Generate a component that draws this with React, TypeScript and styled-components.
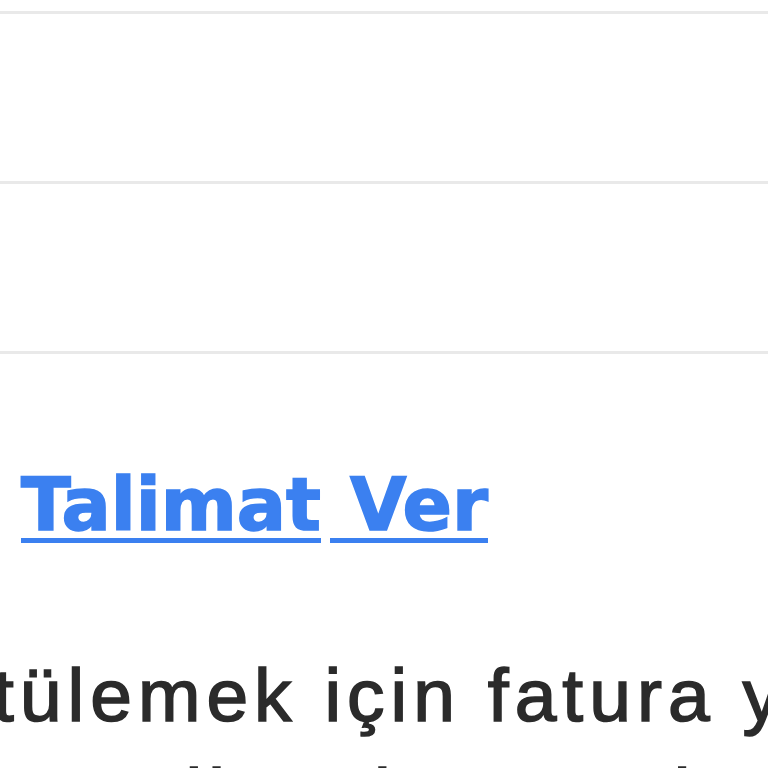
import React from 'react'
import styled, { createGlobalStyle } from 'styled-components'

const GlobalStyle = createGlobalStyle`
  html, body {
    margin: 0;
    padding: 0;
    background: #ffffff;
    overflow: hidden;
  }
`

const Page = styled.div`
  width: 768px;
  height: 768px;
  overflow: hidden;
  background: #ffffff;
`

const List = styled.div`
  display: flex;
  flex-direction: column;
  margin-top: -156px;
`

const Row = styled.div`
  height: 167px;
  border-bottom: 3px solid #e9e9e9;
`

const Actions = styled.div`
  display: flex;
  gap: 9px;
  padding: 117px 0 0 21px;
`

const Word = styled.a<{ lead?: number }>`
  display: block;
  padding-left: ${({ lead }) => lead || 0}px;
  font-family: Verdana, 'DejaVu Sans', sans-serif;
  font-weight: bold;
  font-size: 73px;
  line-height: 67px;
  color: #3b80f0;
  -webkit-text-stroke: 1.6px #3b80f0;
  text-decoration: none;
  border-bottom: 5px solid #3b80f0;
  cursor: pointer;
`

const Description = styled.p`
  margin: 102px 0 0 -7px;
  font-family: 'Liberation Sans', Arial, sans-serif;
  font-size: 75px;
  line-height: 100px;
  letter-spacing: 6px;
  color: #2b2b2b;
  -webkit-text-stroke: 1.6px #2b2b2b;
  white-space: nowrap;
`

const rows = ['fatura', 'kurum', 'abone']

const App = () => {
  return (
    <Page>
      <GlobalStyle />
      <List>
        {rows.map((r) => (
          <Row key={r} />
        ))}
      </List>
      <Actions>
        <Word>Talimat</Word>
        <Word lead={20}>Ver</Word>
      </Actions>
      <Description>
        tülemek için fatura yükleyin
        <br />
        ve talimatlarınızı kolayca takip edin
      </Description>
    </Page>
  )
}

export default App
